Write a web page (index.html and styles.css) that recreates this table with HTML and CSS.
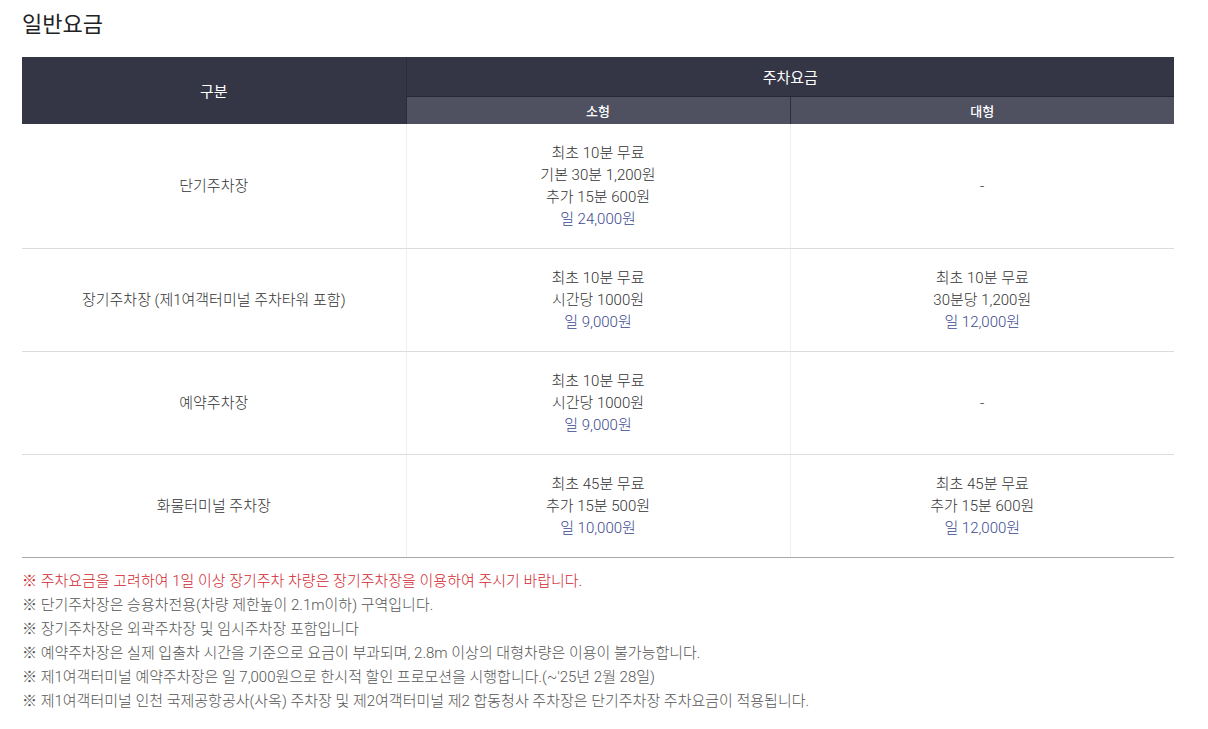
FILE: index.html
```html
<!DOCTYPE html>
<html lang="ko">
<head>
<meta charset="utf-8">
<title>일반요금</title>
<link rel="stylesheet" href="styles.css">
</head>
<body>
<div class="page">
  <h2 class="title">일반요금</h2>
  <table class="fee">
    <colgroup>
      <col class="c1"><col class="c2"><col class="c3">
    </colgroup>
    <thead>
      <tr class="h1">
        <th rowspan="2">구분</th>
        <th colspan="2">주차요금</th>
      </tr>
      <tr class="h2">
        <th>소형</th>
        <th>대형</th>
      </tr>
    </thead>
    <tbody>
      <tr>
        <td>단기주차장</td>
        <td>최초 10분 무료<br>기본 30분 1,200원<br>추가 15분 600원<br><span class="day">일 24,000원</span></td>
        <td>-</td>
      </tr>
      <tr>
        <td>장기주차장 (제1여객터미널 주차타워 포함)</td>
        <td>최초 10분 무료<br>시간당 1000원<br><span class="day">일 9,000원</span></td>
        <td>최초 10분 무료<br>30분당 1,200원<br><span class="day">일 12,000원</span></td>
      </tr>
      <tr>
        <td>예약주차장</td>
        <td>최초 10분 무료<br>시간당 1000원<br><span class="day">일 9,000원</span></td>
        <td>-</td>
      </tr>
      <tr class="last">
        <td>화물터미널 주차장</td>
        <td>최초 45분 무료<br>추가 15분 500원<br><span class="day">일 10,000원</span></td>
        <td>최초 45분 무료<br>추가 15분 600원<br><span class="day">일 12,000원</span></td>
      </tr>
    </tbody>
  </table>
  <ul class="notes">
    <li class="red">※ 주차요금을 고려하여 1일 이상 장기주차 차량은 장기주차장을 이용하여 주시기 바랍니다.</li>
    <li>※ 단기주차장은 승용차전용(차량 제한높이 2.1m이하) 구역입니다.</li>
    <li>※ 장기주차장은 외곽주차장 및 임시주차장 포함입니다</li>
    <li>※ 예약주차장은 실제 입출차 시간을 기준으로 요금이 부과되며, 2.8m 이상의 대형차량은 이용이 불가능합니다.</li>
    <li>※ 제1여객터미널 예약주차장은 일 7,000원으로 한시적 할인 프로모션을 시행합니다.(~'25년 2월 28일)</li>
    <li>※ 제1여객터미널 인천 국제공항공사(사옥) 주차장 및 제2여객터미널 제2 합동청사 주차장은 단기주차장 주차요금이 적용됩니다.</li>
  </ul>
</div>
</body>
</html>
```

FILE: styles.css
```css
html, body {
  margin: 0;
  padding: 0;
  background: #fff;
}
body {
  font-family: "Roboto", "Noto Sans CJK KR", sans-serif;
  color: #333;
}
.page {
  padding: 8px 34px 0 22px;
}
.title {
  margin: 0 0 15px 0;
  font-size: 22px;
  font-weight: 400;
  line-height: 34px;
  color: #222;
}
.fee {
  width: 1152px;
  border-collapse: collapse;
  table-layout: fixed;
}
.c1 { width: 384px; }
.c2 { width: 384px; }
.c3 { width: 384px; }
.fee th {
  color: #fff;
  font-weight: 400;
  text-align: center;
}
.h1 th {
  background: #343646;
  height: 39px;
  font-size: 15px;
  padding: 0;
  border-left: 1px solid #2b2d3a;
  border-bottom: 1px solid #262833;
}
.h1 th:first-child {
  border-left: none;
  border-bottom: none;
}
.h2 th {
  background: #4f5161;
  height: 27px;
  font-size: 13px;
  font-weight: 500;
  padding: 0;
  border-left: 1px solid #2b2d3a;
}
.fee td {
  text-align: center;
  vertical-align: middle;
  font-size: 15px;
  font-weight: 300;
  line-height: 22px;
  padding: 18px 0;
  color: #333;
  border-bottom: 1px solid #dcdcdc;
  border-left: 1px solid #efefef;
}
.fee td:first-child {
  border-left: none;
}
.fee tr.last td {
  border-bottom: 1px solid #a9a9a9;
}
.day {
  color: #3b4a8f;
}
.notes {
  list-style: none;
  margin: 11px 0 0 0;
  padding: 0;
  font-size: 15px;
  font-weight: 300;
  line-height: 24px;
  color: #555;
}
.notes li.red {
  color: #d3262d;
}
```
